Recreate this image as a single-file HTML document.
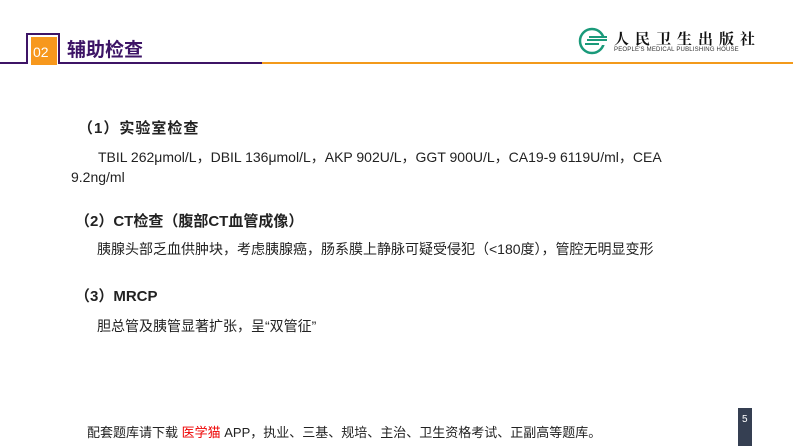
<!DOCTYPE html>
<html><head><meta charset="utf-8"><style>
body{margin:0;width:793px;height:446px;background:#fff;position:relative;overflow:hidden;font-family:"Liberation Sans","Noto Sans CJK SC",sans-serif;color:#222}
.a{position:absolute;white-space:nowrap}
</style></head><body>
<div class="a" style="left:0;top:62px;width:262px;height:2px;background:#3d1466"></div>
<div class="a" style="left:262px;top:62px;width:531px;height:2px;background:#f39a1b"></div>
<div class="a" style="left:26px;top:33px;width:30px;height:29px;border:2px solid #3d1466;border-bottom:none;background:#fff"></div>
<div class="a" style="left:31px;top:37px;width:26px;height:28px;background:#f7981d"></div>
<div class="a" style="left:33px;top:44px;font-size:14px;color:#fff">02</div>
<div class="a" style="left:67px;top:35px;font-size:19px;font-weight:bold;color:#3d1466">辅助检查</div>
<svg class="a" style="left:577px;top:27px" width="36" height="28" viewBox="0 0 36 28"><circle cx="15" cy="14" r="12" fill="none" stroke="#1a9a7a" stroke-width="2.5"/><rect x="6" y="9" width="26" height="9" fill="#fff"/><path d="M8 17h14M10 13h20M12 10h18" stroke="#1a9a7a" stroke-width="2"/></svg>
<div class="a" style="left:614px;top:28px;font-size:15px;font-weight:bold;letter-spacing:6px;font-family:'Noto Serif CJK SC',serif;color:#111">人民卫生出版社</div>
<div class="a" style="left:614px;top:47px;font-size:6px;color:#333;letter-spacing:0.2px">PEOPLE'S MEDICAL PUBLISHING HOUSE</div>
<div class="a" style="left:78px;top:117px;font-size:15px;font-weight:bold;letter-spacing:1px">（1）实验室检查</div>
<div class="a" style="left:98px;top:147px;font-size:14px">TBIL 262μmol/L，DBIL 136μmol/L，AKP 902U/L，GGT 900U/L，CA19-9 6119U/ml，CEA</div>
<div class="a" style="left:71px;top:169px;font-size:14px">9.2ng/ml</div>
<div class="a" style="left:75px;top:210px;font-size:15px;font-weight:bold">（2）CT检查（腹部CT血管成像）</div>
<div class="a" style="left:97px;top:239px;font-size:14px">胰腺头部乏血供肿块，考虑胰腺癌，肠系膜上静脉可疑受侵犯（<180度），管腔无明显变形</div>
<div class="a" style="left:75px;top:285px;font-size:15px;font-weight:bold">（3）MRCP</div>
<div class="a" style="left:97px;top:316px;font-size:14px">胆总管及胰管显著扩张，呈“双管征”</div>
<div class="a" style="left:87px;top:422px;font-size:13px">配套题库请下载 <span style="color:#e00">医学猫</span> APP，执业、三基、规培、主治、卫生资格考试、正副高等题库。</div>
<div class="a" style="left:738px;top:408px;width:14px;height:38px;background:#353f52"></div>
<div class="a" style="left:742px;top:414px;font-size:10px;color:#fff">5</div>
</body></html>
